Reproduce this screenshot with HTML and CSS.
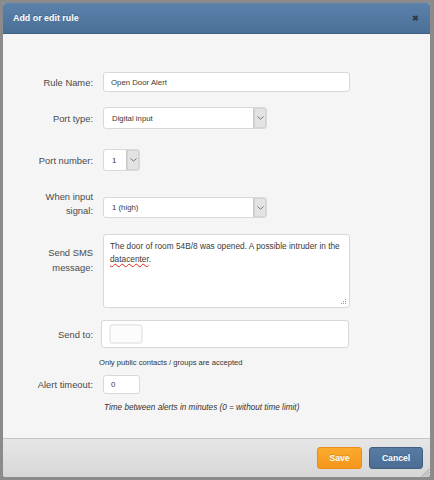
FILE: index.html
```html
<!DOCTYPE html>
<html>
<head>
<meta charset="utf-8">
<link rel="stylesheet" href="styles.css">
</head>
<body>
<div class="dialog">
  <div class="header">
    <span class="title">Add or edit rule</span>
    <span class="close">&#x2716;</span>
  </div>
  <div class="content">
    <div class="row r-name">
      <div class="label">Rule Name:</div>
      <div class="input wide">Open Door Alert</div>
    </div>
    <div class="row r-type">
      <div class="label">Port type:</div>
      <div class="select mid"><span class="val">Digital input</span><span class="arrow"><svg width="7" height="4" viewBox="0 0 7 4"><polyline points="0.5,0.5 3.5,3.2 6.5,0.5" fill="none" stroke="#777" stroke-width="1"/></svg></span></div>
    </div>
    <div class="row r-num">
      <div class="label">Port number:</div>
      <div class="select small"><span class="val">1</span><span class="arrow"><svg width="7" height="4" viewBox="0 0 7 4"><polyline points="0.5,0.5 3.5,3.2 6.5,0.5" fill="none" stroke="#777" stroke-width="1"/></svg></span></div>
    </div>
    <div class="row r-signal">
      <div class="label two">When input<br>signal:</div>
      <div class="select mid sig"><span class="val">1 (high)</span><span class="arrow"><svg width="7" height="4" viewBox="0 0 7 4"><polyline points="0.5,0.5 3.5,3.2 6.5,0.5" fill="none" stroke="#777" stroke-width="1"/></svg></span></div>
    </div>
    <div class="row r-sms">
      <div class="label sms">Send SMS<br>message:</div>
      <div class="textarea">The door of room 54B/8 was opened. A possible intruder in the <span class="spell">datacenter</span>.
        <svg class="grip" width="6" height="6" viewBox="0 0 6 6"><g fill="#999"><rect x="4" y="0" width="1" height="1"/><rect x="2" y="2" width="1" height="1"/><rect x="4" y="2" width="1" height="1"/><rect x="0" y="4" width="1" height="1"/><rect x="2" y="4" width="1" height="1"/><rect x="4" y="4" width="1" height="1"/></g></svg>
      </div>
    </div>
    <div class="row r-to">
      <div class="label">Send to:</div>
      <div class="tagbox"><div class="tag"></div></div>
    </div>
    <div class="hint">Only public contacts / groups are accepted</div>
    <div class="row r-timeout">
      <div class="label">Alert timeout:</div>
      <div class="input small">0</div>
    </div>
    <div class="note">Time between alerts in minutes (0 = without time limit)</div>
  </div>
  <div class="footer">
    <div class="btn save">Save</div>
    <div class="btn cancel">Cancel</div>
    <svg class="fgrip" width="9" height="9" viewBox="0 0 9 9"><g stroke="#9a9a9a" stroke-width="1"><line x1="8.5" y1="1" x2="1" y2="8.5"/><line x1="8.5" y1="4" x2="4" y2="8.5"/><line x1="8.5" y1="7" x2="7" y2="8.5"/></g></svg>
  </div>
</div>
</body>
</html>
```
FILE: styles.css
```css
html, body {
  margin: 0;
  padding: 0;
}
body {
  background: #8b8b8b;
  width: 434px;
  height: 480px;
  padding: 3px 4px 3px 3px;
  box-sizing: border-box;
  font-family: "Liberation Sans", Arial, sans-serif;
  color: #333;
}
.dialog {
  width: 427px;
  height: 474px;
  display: flex;
  flex-direction: column;
  background: #f5f5f5;
  border-radius: 3px;
  overflow: hidden;
}
.header {
  height: 31px;
  flex: none;
  display: flex;
  align-items: center;
  justify-content: space-between;
  padding: 0 11px 0 10px;
  background: linear-gradient(#5b82ab, #4b7098);
  border-bottom: 1px solid #3f5f83;
  box-sizing: border-box;
}
.title {
  color: #fff;
  font-weight: bold;
  font-size: 8.9px;
  text-shadow: 0 -1px 0 rgba(0,0,0,0.2);
}
.close {
  color: #2f3a46;
  font-size: 8px;
  font-weight: bold;
}
.content {
  flex: 1;
  padding-top: 38px;
  box-sizing: border-box;
}
.row {
  display: flex;
  align-items: center;
}
.label {
  width: 90px;
  text-align: right;
  font-size: 9.4px;
  color: #4a4a4a;
  margin-right: 10px;
  flex: none;
}
.input, .select, .textarea, .tagbox {
  background: #fff;
  border: 1px solid #d8d8d8;
  border-radius: 3px;
  box-sizing: border-box;
  font-size: 7.8px;
  color: #3a3a3a;
}
.input {
  display: flex;
  align-items: center;
  padding-left: 7px;
}
.input.wide { width: 247px; height: 20px; }
.input.small { width: 37px; height: 19px; }
.select {
  display: flex;
  align-items: stretch;
  height: 22px;
}
.select.sig { height: 21px; }
.select.mid { width: 164px; }
.select.small { width: 37px; }
.select .val {
  flex: 1;
  display: flex;
  align-items: center;
  padding-left: 8px;
}
.arrow {
  width: 12px;
  flex: none;
  background: #e3e3e3;
  border-left: 1px solid #c9c9c9;
  border-radius: 0 2px 2px 0;
  display: flex;
  align-items: center;
  justify-content: center;
  box-shadow: inset 0 0 0 1px #d4d4d4;
}
.r-name { margin-top: 0; }
.r-type { margin-top: 15px; }
.r-num { margin-top: 20px; }
.r-signal { margin-top: 19px; align-items: flex-start; }
.label.two { line-height: 14px; }
.r-signal .select { margin-top: 7px; }
.r-sms { margin-top: 16px; align-items: flex-start; }
.label.sms { padding-top: 11px; line-height: 15px; }
.textarea {
  width: 247px;
  height: 74px;
  position: relative;
  padding: 5px 6px;
  font-size: 8.3px;
  line-height: 12.5px;
}
.spell {
  text-decoration: underline wavy #e02020;
  text-decoration-thickness: 1px;
  text-underline-offset: 1px;
}
.grip {
  position: absolute;
  right: 2px;
  bottom: 2px;
}
.r-to { margin-top: 12px; }
.tagbox {
  width: 248px;
  height: 28px;
  margin-left: -2px;
  display: flex;
  align-items: center;
  padding-left: 7px;
}
.tag {
  width: 34px;
  height: 20px;
  border: 2px solid #ececec;
  border-radius: 4px;
  box-sizing: border-box;
  background: #fcfcfc;
}
.hint {
  margin: 10px 0 0 96px;
  font-size: 7.6px;
  color: #333;
}
.r-timeout { margin-top: 8px; }
.note {
  margin: 9px 0 0 101px;
  font-size: 8.2px;
  font-style: italic;
  color: #333;
}
.footer {
  height: 39px;
  flex: none;
  border-top: 1px solid #c6c6c6;
  background: linear-gradient(#e6e6e6, #d7d7d7);
  box-sizing: border-box;
  display: flex;
  align-items: center;
  justify-content: flex-end;
  padding-right: 7px;
  gap: 7px;
  position: relative;
}
.btn {
  height: 22px;
  border-radius: 3px;
  color: #fff;
  font-weight: bold;
  font-size: 8.6px;
  display: flex;
  align-items: center;
  justify-content: center;
  box-sizing: border-box;
  text-shadow: 0 -1px 0 rgba(0,0,0,0.15);
}
.save {
  width: 45px;
  background: linear-gradient(#fbab2e, #f5951a);
  border: 1px solid #e88d17;
}
.cancel {
  width: 54px;
  background: linear-gradient(#587ba3, #4b6d94);
  border: 1px solid #435f80;
}
.fgrip {
  position: absolute;
  right: 0;
  bottom: 0;
}
```
